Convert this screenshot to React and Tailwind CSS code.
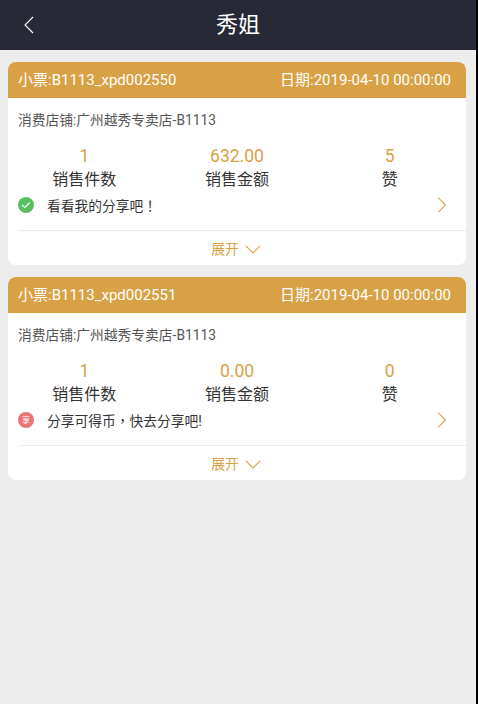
import React from "react";

const receipts = [
  {
    id: "B1113_xpd002550",
    date: "2019-04-10 00:00:00",
    shop: "广州越秀专卖店-B1113",
    count: "1",
    amount: "632.00",
    likes: "5",
    shared: true,
  },
  {
    id: "B1113_xpd002551",
    date: "2019-04-10 00:00:00",
    shop: "广州越秀专卖店-B1113",
    count: "1",
    amount: "0.00",
    likes: "0",
    shared: false,
  },
];

const Stat = ({ value, label }) => (
  <div className="flex flex-1 flex-col items-center">
    <span className="h-6 text-[17.5px] leading-6 text-[#d8a145]">{value}</span>
    <span className="h-6 text-[16px] leading-6 text-[#333333]">{label}</span>
  </div>
);

// full-width punctuation sits in the middle of its cell
const Punct = ({ children }) => (
  <span className="font-['Noto_Sans_CJK_TC',sans-serif]">{children}</span>
);

const ReceiptCard = ({ receipt }) => {
  return (
    <div className="h-[203px] overflow-hidden rounded-lg bg-white">
      <div className="flex h-9 items-center justify-between bg-[#d8a145] pl-[10px] pr-[15px] text-[15px] text-white">
        <span>小票:{receipt.id}</span>
        <span>日期:{receipt.date}</span>
      </div>

      <p className="mt-3 pl-[10px] text-[13.75px] leading-5 text-[#555555]">
        消费店铺:{receipt.shop}
      </p>

      <div className="mt-[14px] flex">
        <Stat value={receipt.count} label="销售件数" />
        <Stat value={receipt.amount} label="销售金额" />
        <Stat value={receipt.likes} label="赞" />
      </div>

      <div className="ml-[10px] flex h-[39px] border-b border-[#ececec] pt-[5px]">
        {receipt.shared ? (
          <span className="flex size-4 items-center justify-center rounded-full bg-[#57bf60]">
            <svg width="10" height="8" viewBox="0 0 10 8" fill="none" stroke="#fff" strokeWidth="1.1">
              <path d="M1 3.8 3.8 6.4 8.8 1.5" />
            </svg>
          </span>
        ) : (
          <span className="flex size-4 items-center justify-center rounded-full bg-[#e97575] text-[8.5px] leading-none text-white">
            享
          </span>
        )}
        <span className="ml-[13px] flex-1 text-[13.75px] leading-4 text-[#333333]">
          {receipt.shared ? (
            <>看看我的分享吧<Punct>！</Punct></>
          ) : (
            <>分享可得币<Punct>，</Punct>快去分享吧!</>
          )}
        </span>
        <svg className="mr-5 h-4 w-2" viewBox="0 0 8 16" fill="none" stroke="#d8a145" strokeWidth="1.1">
          <path d="M0.3 0.8 7.5 8 0.3 15.2" />
        </svg>
      </div>

      <div className="flex h-[34px] items-center justify-center gap-[6px] pt-[2px] pr-[2px] text-[13.75px] text-[#d8a145]">
        <span>展开</span>
        <svg width="16" height="9" viewBox="0 0 16 9" fill="none" stroke="#d8a145" strokeWidth="1.1">
          <path d="M0.8 0.8 8 8 15.2 0.8" />
        </svg>
      </div>
    </div>
  );
};

const App = () => {
  return (
    <div className="h-[704px] w-[478px] border-r-2 border-black bg-[#ededed] font-[Roboto,'Noto_Sans_CJK_SC',sans-serif]">
      <header className="flex h-[50px] items-center bg-[#282936] text-white">
        <svg className="ml-6 h-[18px] w-[10px]" viewBox="0 0 10 18" fill="none" stroke="#fff" strokeWidth="1.1">
          <path d="M9 1 1 9 9 17" />
        </svg>
        <h1 className="mr-[34px] flex-1 text-center text-[22px] leading-[50px]">秀姐</h1>
      </header>

      <main className="flex flex-col gap-3 pt-3 pr-[10px] pl-2">
        {receipts.map((r) => (
          <ReceiptCard key={r.id} receipt={r} />
        ))}
      </main>
    </div>
  );
};

export default App;
